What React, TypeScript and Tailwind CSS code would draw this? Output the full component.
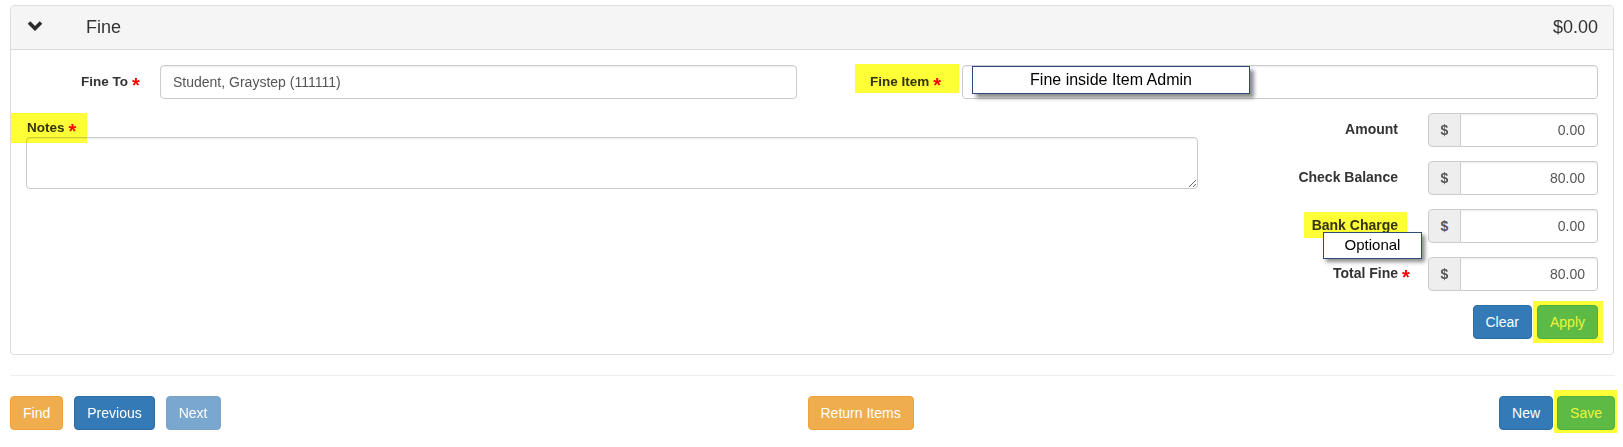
import React from 'react';

function Star() {
  // wrapper sits on the baseline, so the big asterisk can't stretch the line
  return (
    <span className="relative inline-block w-[9px] h-[10px]">
      <span className="absolute left-0 -bottom-[9px] text-[#ff0000] text-[20px] font-bold leading-none">*</span>
    </span>
  );
}

function Highlight({ className }: { className: string }) {
  // yellow marker laid over the screenshot, multiplied so borders still show through
  return <div className={`absolute bg-[#ffff38] mix-blend-multiply pointer-events-none ${className}`} />;
}

function Btn({ children, tone }: { children: React.ReactNode; tone: 'warn' | 'primary' | 'disabled' | 'success' | 'marked' }) {
  const tones = {
    warn: 'bg-[#f0ad4e] border-[#eea236] text-white',
    primary: 'bg-[#337ab7] border-[#2e6da4] text-white',
    disabled: 'bg-[#7aa7d0] border-[#7aa2c8] text-white',
    success: 'bg-[#5cb85c] border-[#4cae4c] text-white',
    // green button sitting under the yellow marker
    marked: 'bg-[#5cba45] border-[#4fae3c] text-[#f0f33e]',
  };
  return (
    <button
      type="button"
      className={`relative h-[34px] px-[12px] border rounded-[4px] text-[14px] leading-[20px] ${tones[tone]}`}
    >
      {children}
    </button>
  );
}

function MoneyRow({ label, value, star }: { label: string; value: string; star?: boolean }) {
  return (
    <div className="flex items-start justify-end">
      <div className="relative pt-[6px] pr-[30px] text-[14px] font-bold leading-[20px] text-[#333]">
        {label}
        {star && (
          <span className="absolute left-full -ml-[26px] top-[10px] text-[#ff0000] text-[20px] font-bold leading-none">*</span>
        )}
      </div>
      <div className="flex w-[170px] h-[34px]">
        <div className="w-[33px] flex items-center justify-center bg-[#eee] border border-[#ccc] rounded-l-[4px] text-[14px] font-bold text-[#555]">
          $
        </div>
        <input
          readOnly
          value={value}
          className="flex-1 min-w-0 border border-l-0 border-[#ccc] rounded-r-[4px] px-[12px] text-right text-[14px] text-[#555] shadow-[inset_0_1px_1px_rgba(0,0,0,0.075)] outline-none"
        />
      </div>
    </div>
  );
}

export default function App() {
  return (
    <div className="w-[1623px] h-[447px] bg-white pt-[5px] font-['Liberation_Sans',Arial,sans-serif] text-[#333]">
      {/* Fine panel */}
      <div className="ml-[10px] mr-[9px] border border-[#ddd] rounded-[4px]">
        <div className="h-[44px] flex items-center bg-[#f5f5f5] border-b border-[#ddd] rounded-t-[4px] pl-[16px] pr-[15px]">
          <svg width="16" height="11" viewBox="0 0 16 11" className="mt-[-4px]">
            <path d="M2 2.5 L8 8.5 L14 2.5" fill="none" stroke="#2a2a2a" strokeWidth="3.6" strokeLinejoin="miter" />
          </svg>
          <span className="ml-[43px] text-[18px]">Fine</span>
          <span className="ml-auto text-[18px]">$0.00</span>
        </div>

        <div className="px-[15px] pt-[15px] pb-[15px]">
          {/* row 1 */}
          <div className="flex items-center h-[34px]">
            <div className="w-[134px] flex justify-end items-baseline pr-[19px] text-[13.5px] font-bold">
              Fine To<span className="ml-[4px]"><Star /></span>
            </div>
            <input
              readOnly
              value="Student, Graystep (111111)"
              className="w-[637px] h-[34px] border border-[#ccc] rounded-[4px] px-[12px] text-[14px] text-[#555] shadow-[inset_0_1px_1px_rgba(0,0,0,0.075)] outline-none"
            />
            <div className="relative ml-[58px] w-[107px] h-[34px] flex items-center pl-[15px] text-[13.5px] font-bold">
              <span>Fine Item<span className="ml-[4px]"><Star /></span></span>
              <Highlight className="left-0 top-[-1px] w-[104px] h-[29px]" />
            </div>
            <div className="relative flex-1 h-[34px]">
              <div className="h-full border border-[#ccc] rounded-[4px] shadow-[inset_0_1px_1px_rgba(0,0,0,0.075)]" />
              <div className="absolute left-[10px] top-[1px] w-[278px] h-[28px] bg-white border-[1.5px] border-[#2d4a78] shadow-[4px_4px_4px_rgba(0,0,0,0.45)] flex items-center justify-center text-[16px] text-black">
                Fine inside Item Admin
              </div>
            </div>
          </div>

          {/* row 2 */}
          <div className="flex mt-[14px]">
            <div className="relative w-[1172px] pt-[6px]">
              <div className="h-[18px] leading-[18px] pl-[1px] text-[13.5px] font-bold">
                Notes<span className="ml-[4px]"><Star /></span>
              </div>
              <textarea className="block w-full h-[52px] border border-[#ccc] rounded-[4px] shadow-[inset_0_1px_1px_rgba(0,0,0,0.075)] outline-none" />
              <Highlight className="left-[-15px] top-0 w-[76px] h-[30px]" />
            </div>

            <div className="flex-1 flex flex-col gap-[14px]">
              <MoneyRow label="Amount" value="0.00" />
              <MoneyRow label="Check Balance" value="80.00" />
              <div className="relative">
                <MoneyRow label="Bank Charge" value="0.00" />
                <Highlight className="right-[191px] top-[3px] w-[103px] h-[26px]" />
                <div className="absolute right-[176px] top-[23px] w-[99px] h-[27px] bg-white border-[1.5px] border-[#2d4a78] shadow-[3px_3px_4px_rgba(0,0,0,0.45)] flex items-center justify-center text-[15px] text-black">
                  Optional
                </div>
              </div>
              <MoneyRow label="Total Fine" value="80.00" star />
              <div className="flex justify-end gap-[5px]">
                <Btn tone="primary">Clear</Btn>
                <div className="relative">
                  <div className="absolute -left-[4px] -right-[5px] -top-[4px] -bottom-[4px] bg-[#ffff38]" />
                  <Btn tone="marked">Apply</Btn>
                </div>
              </div>
            </div>
          </div>
        </div>
      </div>

      <div className="ml-[10px] mr-[8px] mt-[20px] h-px bg-[#eee]" />

      {/* footer buttons */}
      <div className="flex items-center ml-[10px] mr-[8px] mt-[20px]">
        <div className="flex gap-[11px]">
          <Btn tone="warn">Find</Btn>
          <Btn tone="primary">Previous</Btn>
          <Btn tone="disabled">Next</Btn>
        </div>
        <div className="ml-[587px]">
          <Btn tone="warn">Return Items</Btn>
        </div>
        <div className="ml-auto flex gap-[4px]">
          <Btn tone="primary">New</Btn>
          <div className="relative">
            <div className="absolute -left-[3px] -right-[2px] -top-[6px] -bottom-[3px] bg-[#ffff38]" />
            <Btn tone="marked">Save</Btn>
          </div>
        </div>
      </div>
    </div>
  );
}
